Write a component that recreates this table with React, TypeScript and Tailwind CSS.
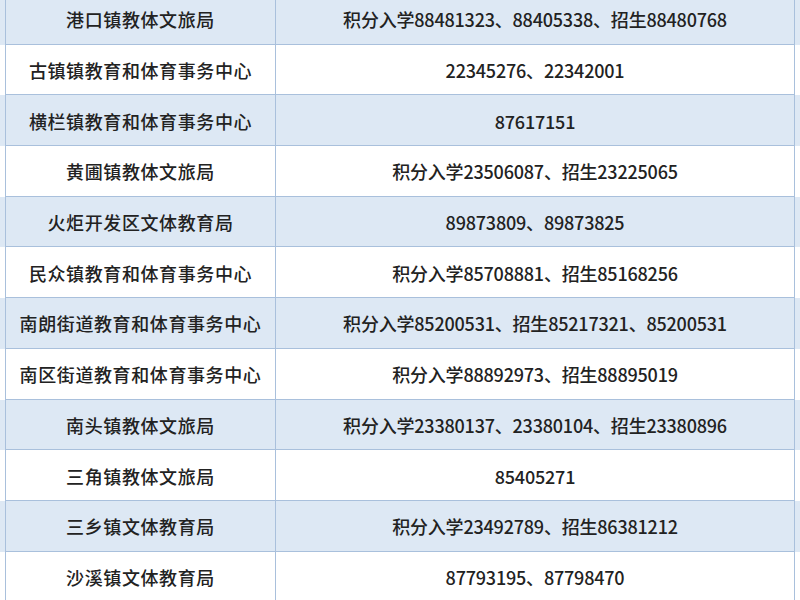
const rows: [string, string][] = [
  ['港口镇教体文旅局', '积分入学88481323、88405338、招生88480768'],
  ['古镇镇教育和体育事务中心', '22345276、22342001'],
  ['横栏镇教育和体育事务中心', '87617151'],
  ['黄圃镇教体文旅局', '积分入学23506087、招生23225065'],
  ['火炬开发区文体教育局', '89873809、89873825'],
  ['民众镇教育和体育事务中心', '积分入学85708881、招生85168256'],
  ['南朗街道教育和体育事务中心', '积分入学85200531、招生85217321、85200531'],
  ['南区街道教育和体育事务中心', '积分入学88892973、招生88895019'],
  ['南头镇教体文旅局', '积分入学23380137、23380104、招生23380896'],
  ['三角镇教体文旅局', '85405271'],
  ['三乡镇文体教育局', '积分入学23492789、招生86381212'],
  ['沙溪镇文体教育局', '87793195、87798470'],
];

export default function App() {
  return (
    <div
      className="h-[600px] w-[800px] overflow-hidden bg-white text-[18px] font-medium text-[#222]"
      style={{ fontFamily: '"Noto Sans CJK SC", "Noto Sans", sans-serif' }}
    >
      <div className="-mt-[6px]">
        {rows.map(([org, phone], i) => (
          <div key={org} className={i % 2 === 0 ? 'bg-[#dde8f4]' : 'bg-white'}>
            <div className="mx-[5px] grid h-[50.7px] grid-cols-[270px_1fr] border-x border-b border-[#a9c0dc]">
              <div className="flex items-center justify-center border-r border-[#a9c0dc] pt-[2px] tracking-[0.6px]">
                {org}
              </div>
              <div className="flex items-center justify-center pt-[2px] tracking-[-0.2px]">{phone}</div>
            </div>
          </div>
        ))}
      </div>
    </div>
  );
}
